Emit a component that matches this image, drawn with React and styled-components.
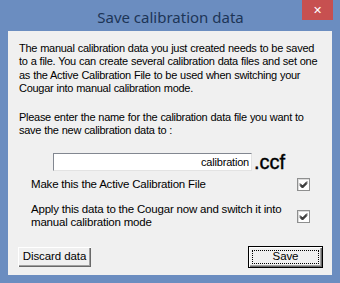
import styled, { createGlobalStyle } from "styled-components";

const Global = createGlobalStyle`
	body {
		margin: 0;
		background: #6b8dc0;
	}
`;

export default function App() {
	return (
		<>
			<Global />
			<Window>
				<TitleBar>
					<Title>Save calibration data</Title>
					<CloseButton>✕</CloseButton>
				</TitleBar>

				<Client>
					<Paragraph>
						The manual calibration data you just created needs to be saved to a file. You can create several calibration data files and set one as the Active Calibration File to be used when switching your Cougar into manual calibration mode.
					</Paragraph>

					<Paragraph top={16}>
						Please enter the name for the calibration data file you want to save the new calibration data to :
					</Paragraph>

					<FileRow>
						<FileInput defaultValue="calibration" />
						<Extension>.ccf</Extension>
					</FileRow>

					<OptionRow top={7}>
						<OptionLabel>Make this the Active Calibration File</OptionLabel>
						<CheckBox checked />
					</OptionRow>

					<OptionRow top={12}>
						<OptionLabel>
							Apply this data to the Cougar now and switch it into manual calibration mode
						</OptionLabel>
						<CheckBox checked />
					</OptionRow>

					<ButtonRow>
						<Button>Discard data</Button>
						<Button isDefault>
							<FocusRing>Save</FocusRing>
						</Button>
					</ButtonRow>
				</Client>
			</Window>
		</>
	);
}

function CheckBox({ checked }) {
	return (
		<Box>
			{checked && (
				<svg width="9" height="9" viewBox="0 0 9 9">
					<path d="M1 3.5 L3.5 6 L8 1.5 M1 4.5 L3.5 7 L8 2.5 M1 5.5 L3.5 8 L8 3.5" stroke="#000" strokeWidth="1" fill="none" />
				</svg>
			)}
		</Box>
	);
}

const Window = styled.div`
	width: 340px;
	height: 283px;
	display: flex;
	flex-direction: column;
	background: #6b8dc0;
	font-family: "Liberation Sans", Arial, sans-serif;
`;

const TitleBar = styled.div`
	position: relative;
	height: 31px;
	display: flex;
	align-items: center;
	justify-content: center;
`;

const Title = styled.div`
	font-family: "Noto Sans", "Open Sans", sans-serif;
	font-size: 15px;
	color: #1d3557;
	margin-top: 2px;
	margin-left: 1px;
`;

const CloseButton = styled.div`
	position: absolute;
	top: 0;
	left: 302px;
	width: 31px;
	height: 20px;
	background: #c75050;
	color: #fff;
	font-family: "DejaVu Sans", sans-serif;
	font-size: 11px;
	font-weight: bold;
	display: flex;
	align-items: center;
	justify-content: center;
`;

const Client = styled.div`
	margin: 0 8px 8px 8px;
	height: 244px;
	background: #f0f0f0;
	display: flex;
	flex-direction: column;
	padding: 11px 9px 7px 11px;
	box-sizing: border-box;
	font-size: 11px;
	line-height: 13.3px;
	color: #000;
`;

const Paragraph = styled.div`
	margin-top: ${(props) => props.top || 0}px;
	letter-spacing: -0.28px;
	word-spacing: 0.3px;
`;

const FileRow = styled.div`
	display: flex;
	align-items: center;
	margin-top: 15px;
	margin-left: 34px;
	height: 18px;
`;

const FileInput = styled.input`
	width: 199px;
	height: 18px;
	box-sizing: border-box;
	border: 1px solid #828790;
	border-right-color: #e3e3e3;
	border-bottom-color: #e3e3e3;
	background: #fff;
	font-family: "Liberation Sans", Arial, sans-serif;
	font-size: 11px;
	letter-spacing: -0.2px;
	text-align: right;
	padding: 1px 2px 0 0;
	outline: none;
`;

const Extension = styled.span`
	font-size: 20px;
	line-height: 18px;
	margin-left: 2px;
	margin-top: 1px;
	-webkit-text-stroke: 0.4px #000;
`;

const OptionRow = styled.div`
	display: flex;
	align-items: center;
	justify-content: space-between;
	margin-top: ${(props) => props.top}px;
	padding: 0 13px 0 12px;
`;

const OptionLabel = styled.div`
	width: 255px;
	letter-spacing: -0.2px;
	font-size: 11.5px;
`;

const Box = styled.div`
	width: 13px;
	height: 13px;
	box-sizing: border-box;
	border: 1px solid #8e8f8f;
	background: #fff;
	display: flex;
	align-items: center;
	justify-content: center;
	box-shadow: inset 1px 1px 0 #dcdcdc;
`;

const ButtonRow = styled.div`
	margin-top: auto;
	display: flex;
	justify-content: space-between;
`;

const Button = styled.div`
	width: 75px;
	height: 22px;
	box-sizing: border-box;
	background: #f0f0f0;
	display: flex;
	align-items: center;
	justify-content: center;
	font-size: 11.5px;
	letter-spacing: -0.1px;
	margin-left: ${(props) => (props.isDefault ? 0 : "-2px")};
	border: 1px solid ${(props) => (props.isDefault ? "#000" : "transparent")};
	box-shadow: inset 1px 1px 0 #fff, inset -1px -1px 0 #696969, inset -2px -2px 0 #a0a0a0;
	${(props) => props.isDefault && "padding: 3px;"}
`;

const FocusRing = styled.div`
	width: 100%;
	height: 100%;
	box-sizing: border-box;
	border: 1px dotted #000;
	display: flex;
	align-items: center;
	justify-content: center;
`;
